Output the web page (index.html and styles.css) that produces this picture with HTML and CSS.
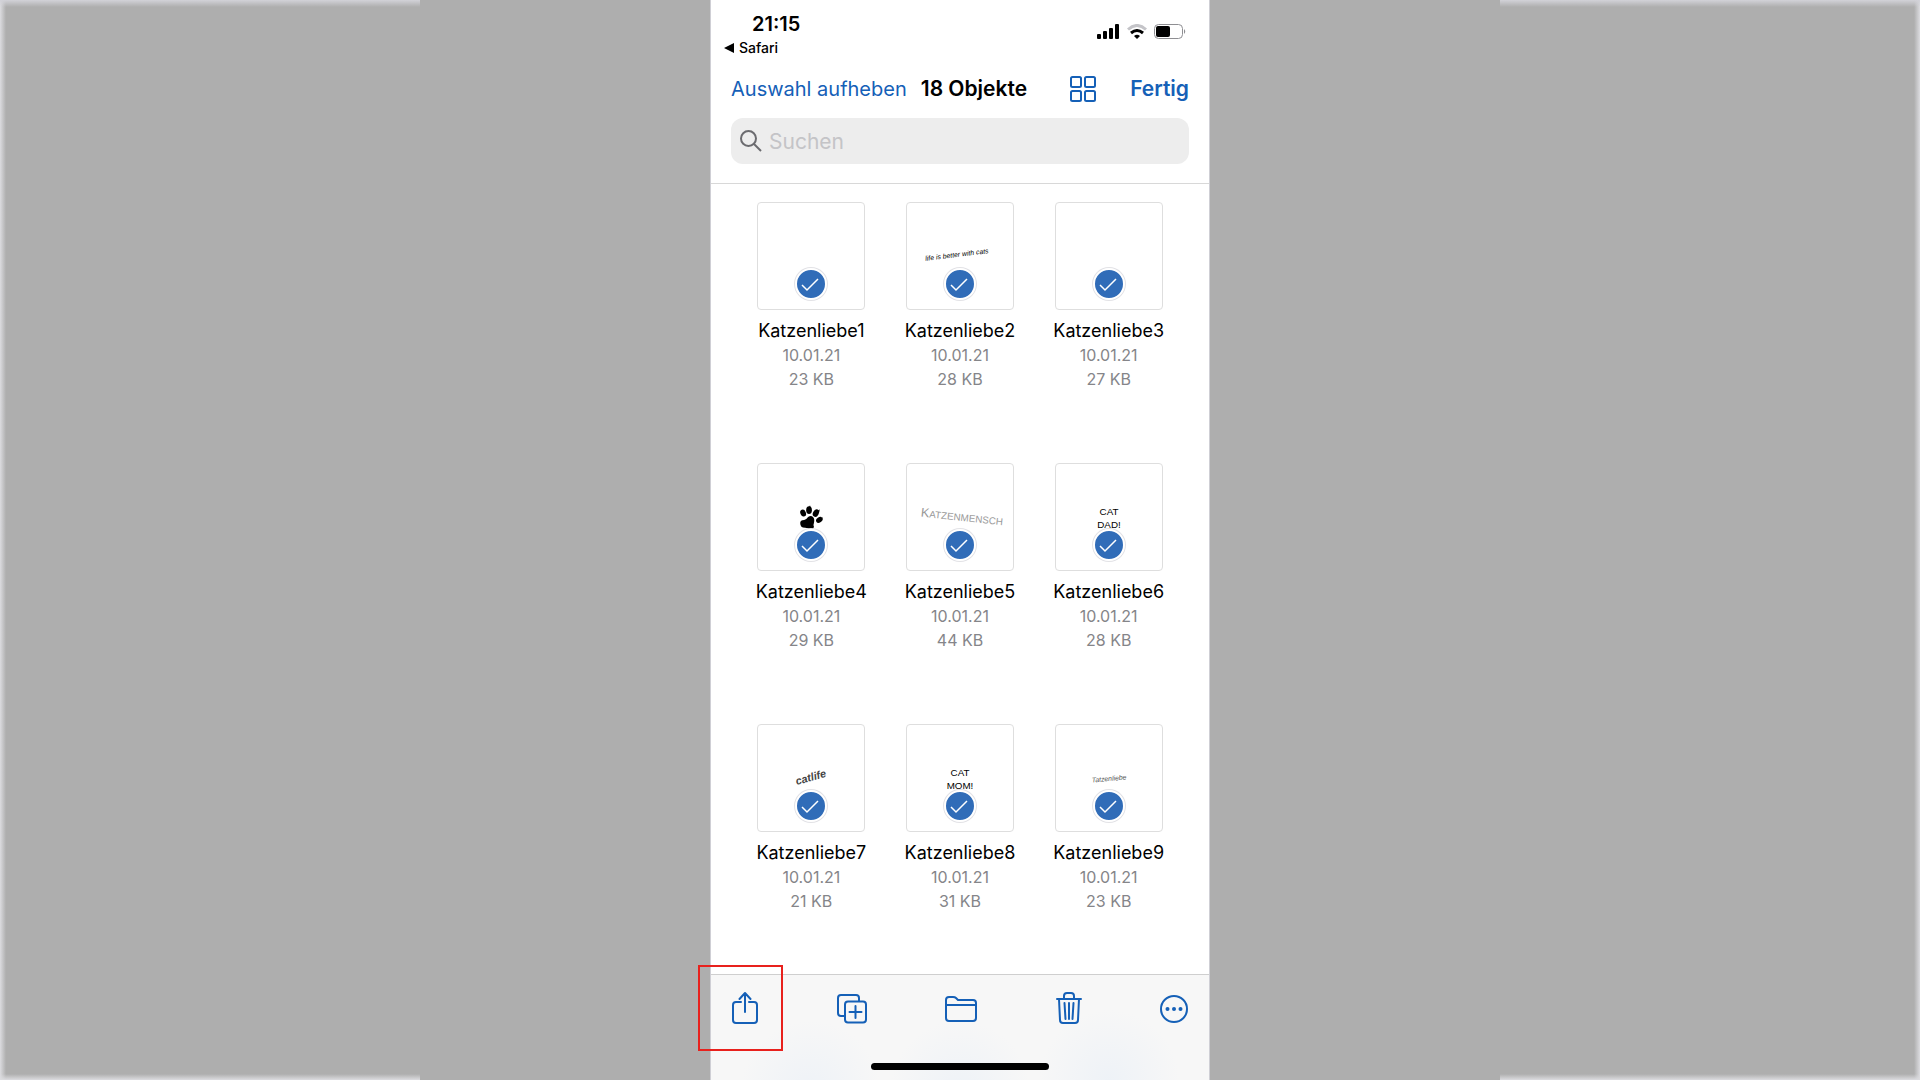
FILE: index.html
```html
<!DOCTYPE html>
<html lang="de">
<head>
  <meta charset="UTF-8" />
  <meta name="viewport" content="width=device-width, initial-scale=1.0">
  <title>Dateien - 18 Objekte</title>
  <link rel="stylesheet" href="styles.css">
</head>
<body>
  <div class="side side-left"></div>

  <main class="phone">
    <header class="top">
      <div class="status">
        <div class="status-left">
          <div class="clock">21:15</div>
          <a class="back" href="#"><svg width="10" height="10" viewBox="0 0 10 10"><path d="M10 0v10L0 5z"/></svg>Safari</a>
        </div>
        <svg class="signals" width="90" height="18" viewBox="0 0 90 18">
          <rect x="0" y="10" width="4" height="5" rx="1"/>
          <rect x="6" y="7" width="4" height="8" rx="1"/>
          <rect x="12" y="4" width="4" height="11" rx="1"/>
          <rect x="18" y="0" width="4" height="15" rx="1"/>
          <g fill="none" stroke-width="3">
            <path d="M31 5.500Q40 -2.500 49 5.500" stroke="#c4c4c8"/>
            <path d="M34 9Q40 4 46 9" stroke="#000"/>
          </g>
          <path d="M37 12Q40 9.500 43 12L40 15z"/>
          <rect x="57.500" y="0.500" width="28" height="14" rx="4" fill="#fff" stroke="#8e8e92"/>
          <rect x="59" y="2" width="14" height="11" rx="2"/>
          <path d="M87 5q2.500 2.500 0 5z" fill="#8e8e92"/>
        </svg>
      </div>

      <nav class="navbar">
        <button class="link">Auswahl aufheben</button>
        <h1>18 Objekte</h1>
        <button class="view" aria-label="Ansicht">
          <svg class="icon" width="26" height="26" viewBox="0 0 26 26">
            <rect x="1" y="1" width="10" height="10" rx="1.500"/>
            <rect x="15" y="1" width="10" height="10" rx="1.500"/>
            <rect x="1" y="15" width="10" height="10" rx="1.500"/>
            <rect x="15" y="15" width="10" height="10" rx="1.500"/>
          </svg>
        </button>
        <button class="link done">Fertig</button>
      </nav>

      <label class="search">
        <svg width="22" height="22" viewBox="0 0 22 22"><circle cx="8.500" cy="8.500" r="7.500"/><path d="M14 14l7 7"/></svg>
        <input type="search" placeholder="Suchen" aria-label="Suchen">
      </label>
    </header>

    <section class="files">
      <label class="file">
        <span class="thumb"><input type="checkbox" checked><svg class="tick" viewBox="0 0 28 28"><path d="M5 15l5 5L21 9"/></svg></span>
        <span class="name">Katzenliebe1</span>
        <span class="meta">10.01.21</span>
        <span class="meta">23 KB</span>
      </label>
      <label class="file">
        <span class="thumb">
          <svg class="art" viewBox="0 0 108 108"><text class="script" x="51" y="55" font-size="7" transform="rotate(-7 51 54)">life is better with cats</text></svg>
          <input type="checkbox" checked><svg class="tick" viewBox="0 0 28 28"><path d="M5 15l5 5L21 9"/></svg>
        </span>
        <span class="name">Katzenliebe2</span>
        <span class="meta">10.01.21</span>
        <span class="meta">28 KB</span>
      </label>
      <label class="file">
        <span class="thumb"><input type="checkbox" checked><svg class="tick" viewBox="0 0 28 28"><path d="M5 15l5 5L21 9"/></svg></span>
        <span class="name">Katzenliebe3</span>
        <span class="meta">10.01.21</span>
        <span class="meta">27 KB</span>
      </label>
      <label class="file">
        <span class="thumb">
          <svg class="art" viewBox="0 0 108 108">
            <ellipse cx="46" cy="50" rx="2.800" ry="3.600" transform="rotate(-25 46 50)"/>
            <ellipse cx="52" cy="47" rx="2.900" ry="3.900"/>
            <ellipse cx="59" cy="50" rx="2.900" ry="4" transform="rotate(28 59 50)"/>
            <ellipse cx="62.500" cy="57" rx="2.600" ry="3.600" transform="rotate(55 62.500 57)"/>
            <path d="M52 44l1-2 1 4zM61 48l2-2-1 4zM64 56l2-2-1 4z"/>
            <path d="M43 60q0-3 4-3 2 0 4-3 3-2 5 0 2 2 1 6-1 2 0 4-1 4-4 3-2-2-5-2-5 0-5-5z"/>
          </svg>
          <input type="checkbox" checked><svg class="tick" viewBox="0 0 28 28"><path d="M5 15l5 5L21 9"/></svg>
        </span>
        <span class="name">Katzenliebe4</span>
        <span class="meta">10.01.21</span>
        <span class="meta">29 KB</span>
      </label>
      <label class="file">
        <span class="thumb">
          <svg class="art" viewBox="0 0 108 108"><text class="pale" x="56" y="58" font-size="10" transform="rotate(6 56 54)"><tspan font-size="13">K</tspan>ATZENMENSCH</text></svg>
          <input type="checkbox" checked><svg class="tick" viewBox="0 0 28 28"><path d="M5 15l5 5L21 9"/></svg>
        </span>
        <span class="name">Katzenliebe5</span>
        <span class="meta">10.01.21</span>
        <span class="meta">44 KB</span>
      </label>
      <label class="file">
        <span class="thumb">
          <svg class="art" viewBox="0 0 108 108"><text x="54" y="52" font-size="10">CAT</text><text x="54" y="65" font-size="10">DAD!</text></svg>
          <input type="checkbox" checked><svg class="tick" viewBox="0 0 28 28"><path d="M5 15l5 5L21 9"/></svg>
        </span>
        <span class="name">Katzenliebe6</span>
        <span class="meta">10.01.21</span>
        <span class="meta">28 KB</span>
      </label>
      <label class="file">
        <span class="thumb">
          <svg class="art" viewBox="0 0 108 108"><text class="script bold" x="54" y="57" font-size="11" transform="rotate(-16 54 54)">catlife</text></svg>
          <input type="checkbox" checked><svg class="tick" viewBox="0 0 28 28"><path d="M5 15l5 5L21 9"/></svg>
        </span>
        <span class="name">Katzenliebe7</span>
        <span class="meta">10.01.21</span>
        <span class="meta">21 KB</span>
      </label>
      <label class="file">
        <span class="thumb">
          <svg class="art" viewBox="0 0 108 108"><text x="54" y="52" font-size="10">CAT</text><text x="54" y="65" font-size="10">MOM!</text></svg>
          <input type="checkbox" checked><svg class="tick" viewBox="0 0 28 28"><path d="M5 15l5 5L21 9"/></svg>
        </span>
        <span class="name">Katzenliebe8</span>
        <span class="meta">10.01.21</span>
        <span class="meta">31 KB</span>
      </label>
      <label class="file">
        <span class="thumb">
          <svg class="art" viewBox="0 0 108 108"><text class="script soft" x="54" y="57" font-size="7" transform="rotate(-5 54 54)">Tatzenliebe</text></svg>
          <input type="checkbox" checked><svg class="tick" viewBox="0 0 28 28"><path d="M5 15l5 5L21 9"/></svg>
        </span>
        <span class="name">Katzenliebe9</span>
        <span class="meta">10.01.21</span>
        <span class="meta">23 KB</span>
      </label>
    </section>

    <footer class="toolbar">
      <div class="tools">
        <button class="share" aria-label="Teilen">
          <svg class="icon" width="26" height="32" viewBox="0 0 26 32"><path d="M9 10H4q-3 0-3 3v15q0 3 3 3h18q3 0 3-3V13q0-3-3-3h-5M13 20V1M7.500 7L13 1l5.500 6"/></svg>
        </button>
        <button aria-label="Duplizieren">
          <svg class="icon" width="30" height="32" viewBox="0 0 30 32"><path d="M8 24H4q-3 0-3-3V6q0-3 3-3h15q3 0 3 3v3"/><rect x="8" y="9.500" width="21" height="21" rx="3"/><path d="M18.500 14v12M12.500 20h12"/></svg>
        </button>
        <button aria-label="Bewegen">
          <svg class="icon" width="32" height="32" viewBox="0 0 32 32"><path d="M1 26V8q0-3 3-3h4q2 0 3 1l2 2h15q3 0 3 3v15q0 3-3 3H4q-3 0-3-3zM1 13h30"/></svg>
        </button>
        <button aria-label="Löschen">
          <svg class="icon" width="26" height="32" viewBox="0 0 26 32"><path d="M1 7h24M8 7V4q0-3 3-3h4q3 0 3 3v3M3 7l1 21q0 3 3 3h12q3 0 3-3L23 7M8.500 11l1 16M13 11v16M17.500 11l-1 16"/></svg>
        </button>
        <button aria-label="Mehr">
          <svg class="icon" width="28" height="32" viewBox="0 0 28 32"><circle cx="14" cy="17" r="13"/><g class="dots"><circle cx="7.500" cy="17" r="2"/><circle cx="14" cy="17" r="2"/><circle cx="20.500" cy="17" r="2"/></g></svg>
        </button>
      </div>
      <div class="home"></div>
      <div class="marker"></div>
    </footer>
  </main>

  <div class="side side-right"></div>
</body>
</html>
```
FILE: styles.css
```css
* {
  box-sizing: border-box;
}
body {
  margin: 0;
  min-height: 100vh;
  display: grid;
  grid-template-columns: minmax(0, 420px) 1fr minmax(0, 420px);
  background: #aeaeae;
  font-family: Inter, "Liberation Sans", sans-serif;
  color: #000;
}
button {
  padding: 0;
  border: none;
  background: none;
  font: inherit;
  color: #1560b7;
  cursor: pointer;
}
svg {
  display: block;
}

/* light frame on the outer panels */
.side {
  overflow: hidden;
}
.side-left {
  background:
    linear-gradient(#d2d2d8, #aeaeae00 7px),
    linear-gradient(to top, #dcdce0, #aeaeae00 6px),
    linear-gradient(to right, #dcdce0, #aeaeae00 6px);
}
.side-right {
  background:
    linear-gradient(#d2d2d8, #aeaeae00 7px),
    linear-gradient(to top, #dcdce0, #aeaeae00 6px),
    linear-gradient(to left, #dcdce0, #aeaeae00 6px);
}

.phone {
  width: 500px;
  max-width: 100%;
  min-height: 100vh;
  margin: 0 auto;
  display: flex;
  flex-direction: column;
  background: #fff;
  border: solid #cfcfd5;
  border-width: 0 1px;
}
.top {
  padding: 12px 20px 19px;
  border-bottom: 1px solid #d8d8d8;
}

/* status bar */
.status {
  display: flex;
  justify-content: space-between;
}
.clock {
  padding-left: 21px;
  font-size: 20px;
  line-height: 24px;
  font-weight: 600;
}
.back {
  display: flex;
  align-items: center;
  gap: 5px;
  margin-left: -7px;
  font-size: 14px;
  line-height: 24px;
  font-weight: 500;
  color: #000;
  text-decoration: none;
}
.signals {
  margin: 12px 2px 0 0;
}

/* title row */
.navbar {
  display: flex;
  align-items: center;
  height: 58px;
  font-size: 21px;
  line-height: 28px;
}
h1 {
  margin: 0 auto 0 14px;
  font-size: 21px;
  font-weight: 600;
  white-space: nowrap;
}
.link {
  font-size: 20px;
  white-space: nowrap;
}
.done {
  margin-left: 34px;
  font-size: 21px;
  font-weight: 600;
}
.icon {
  fill: none;
  stroke: #1560b7;
  stroke-width: 2;
  stroke-linecap: round;
  stroke-linejoin: round;
}
.dots {
  fill: #1560b7;
  stroke: none;
}

.search {
  display: flex;
  align-items: center;
  gap: 7px;
  height: 46px;
  padding: 0 9px;
  border-radius: 12px;
  background: #ededed;
}
.search svg {
  fill: none;
  stroke: #6b6b6f;
  stroke-width: 2;
}
.search input {
  flex: 1;
  min-width: 0;
  padding: 0;
  border: none;
  outline: none;
  background: none;
  font: inherit;
  font-size: 21px;
}
.search input::placeholder {
  color: #c4c4c7;
}

/* file grid */
.files {
  flex: 1;
  display: grid;
  grid-template-columns: repeat(3, 1fr);
  align-content: start;
  row-gap: 72px;
  padding: 18px 26px;
}
.file {
  display: flex;
  flex-direction: column;
  align-items: center;
}
.thumb {
  position: relative;
  width: 108px;
  height: 108px;
  margin-bottom: 8px;
  border: 1px solid #dedede;
  border-radius: 4px;
}
.art {
  width: 100%;
  height: 100%;
}
.art text {
  font-family: "Liberation Sans", sans-serif;
  text-anchor: middle;
}
.script {
  font-style: italic;
}
.bold {
  font-weight: bold;
  fill: #444;
}
.soft {
  fill: #555;
}
.pale {
  fill: #999;
}
.thumb input {
  appearance: none;
  position: absolute;
  left: 50%;
  bottom: 9px;
  width: 32px;
  height: 32px;
  margin: 0 0 0 -16px;
  border: 2px solid #fff;
  border-radius: 50%;
  background: #306cb8;
  box-shadow: 0 0 0 1px #e2e2e6;
}
.tick {
  position: absolute;
  left: 50%;
  bottom: 11px;
  width: 28px;
  height: 28px;
  margin-left: -14px;
  fill: none;
  stroke: #fff;
  stroke-width: 1.5;
  pointer-events: none;
}
.name {
  font-size: 18px;
  line-height: 25px;
}
.meta {
  font-size: 16px;
  line-height: 24px;
  color: #858589;
}

/* bottom bar */
.toolbar {
  position: relative;
  padding: 17px 21px 10px;
  border-top: 1px solid #cfcfcf;
  background:
    radial-gradient(circle at 20% 110%, #eef2f7, #eef2f700 70px),
    radial-gradient(circle at 50% 110%, #eef2f7, #eef2f700 70px),
    radial-gradient(circle at 80% 100%, #eef2f7, #eef2f700 70px),
    #f7f7f7;
}
.tools {
  display: flex;
  justify-content: space-between;
}
.home {
  width: 178px;
  height: 7px;
  margin: 39px auto 0;
  border-radius: 4px;
  background: #000;
}
.marker {
  position: absolute;
  left: -13px;
  top: -10px;
  width: 85px;
  height: 86px;
  border: 2px solid #e8211d;
  pointer-events: none;
}
```
